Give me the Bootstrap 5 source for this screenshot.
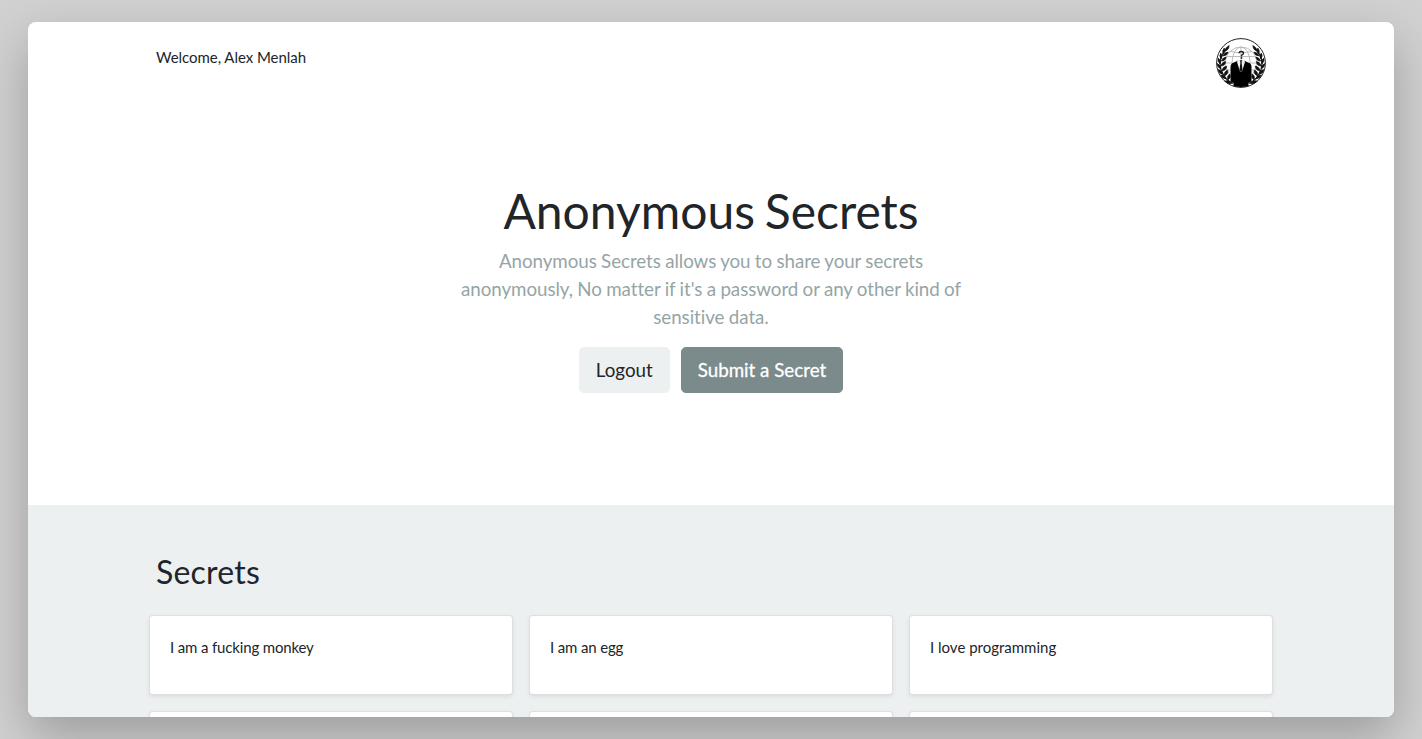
<!DOCTYPE html>
<html lang="en">
<head>
<meta charset="utf-8">
<meta name="viewport" content="width=device-width, initial-scale=1">
<title>Anonymous Secrets</title>
<link href="https://cdn.jsdelivr.net/npm/bootstrap@5.3.0/dist/css/bootstrap.min.css" rel="stylesheet">
<style>
  body { font-family: Lato, "Liberation Sans", sans-serif; font-size: 15px; line-height: 1.5; color: #212529; background: #d1d1d1; padding: 22px 28px; font-variant-ligatures: none; }
  .window-frame { height: 695px; border-radius: 8px; box-shadow: 0 20px 50px rgba(0,0,0,.25); }
  .page-width { width: 1140px; }
  .top-bar { height: 82px; padding: 16px 15px; }
  .welcome-text { margin-top: 8px; letter-spacing: -.04px; }
  .hero { height: 401px; padding-top: 78px; }
  .hero h1 { font-size: 48px; font-weight: 400; line-height: 57.6px; margin-bottom: 7px; word-spacing: -2.5px; }
  .intro { width: 520px; font-size: 18.75px; line-height: 28px; color: #95a5a6; margin-bottom: 16px; letter-spacing: -.05px; word-spacing: -.4px; }
  .btn-lg { --bs-btn-font-size: 18.75px; --bs-btn-border-radius: 4.8px; line-height: 28px; }
  .btn-pale { --bs-btn-bg: #ecf0f1; --bs-btn-color: #212529; --bs-btn-border-color: #ecf0f1; }
  .btn-slate { --bs-btn-bg: #7b8a8b; --bs-btn-color: #fff; --bs-btn-border-color: #7b8a8b; -webkit-text-stroke: .3px #fff; }
  .hero-actions { gap: 11px; }
  .secrets { background: #ecf0f1; padding-top: 48px; min-height: 212px; }
  .secrets h2 { font-size: 32px; font-weight: 400; line-height: 38px; padding-left: 15px; margin-bottom: 16px; letter-spacing: .2px; }
  .secret-card { height: 80px; padding: 20px; border: 1px solid rgba(0,0,0,.125); border-radius: 4px; box-shadow: 0 2px 4px rgba(0,0,0,.075); }
  .tight-text { letter-spacing: -.15px; }
</style>
</head>
<body>
<div class="window-frame bg-white overflow-hidden">
  <header class="page-width mx-auto top-bar d-flex justify-content-between align-items-start">
    <span class="welcome-text">Welcome, Alex Menlah</span>
    <svg width="50" height="50" viewBox="0 0 50 50" role="img" aria-label="Anonymous">
      <circle cx="25" cy="25" r="24.400" fill="#fff" stroke="#222" stroke-width="1"/>
      <g fill="none" stroke="#b5b5b5" stroke-width=".9">
        <circle cx="25" cy="25" r="16"/>
        <ellipse cx="25" cy="25" rx="9" ry="16"/>
        <path d="M25 9v32M9 25h32M10.500 18.500h29M14 13.500q11 3 22 0M11 32h28"/>
      </g>
      <g id="laurel">
        <path d="M10.500 11C3 19 2.500 28 7 36q3 6 10 9.500" fill="none" stroke="#222" stroke-width="1.300"/>
        <g fill="#111" stroke="#111" stroke-width=".6" transform="translate(-.8 0)">
          <path d="M9.500 13q1-4 4.500-5.500-.5 5-4.500 5.500zM8 16q-1.500-3 1-6 2 3-1 6zM7.500 18q2-4 5.500-4-1 4-5.500 4zM6 21q-2.500-3-.5-6 2.500 3 .5 6zM6 23q2-4 5-4-1 4.500-5 4zM5 26q-3-2.500-2-6 3.500 3 2 6zM5.500 28q1.500-4.500 5-4.500-.5 4.500-5 4.500zM5.500 31q-3.500-2-3.500-5.500 4 2 3.500 5.500zM6.500 33q1-4.500 5-5 0 4.500-5 5zM7.500 36.500q-4.500-1.500-4.500-5 4.500 1 4.500 5zM9 38q-.5-4.500 3.500-6 1 4.500-3.500 6zM11 41q-4.500-.5-5.500-4 4.500 0 5.500 4zM12.500 42q-1-4.500 2-6 2 4-2 6zM16.500 45.500q-4.500 1-7-2.500 4.500-1.500 7 2.500z"/>
        </g>
      </g>
      <use href="#laurel" transform="matrix(-1 0 0 1 50 0)"/>
      <path d="M14.500 43.500V29q0-3.500 3-4.200l4.500-2.300h6l4.500 2.300q3 .7 3 4.200v14.500l-3 1.500v3.300q-7.500 1.500-15 0V45z" fill="#000"/>
      <path d="M22 21.500L25 23l3-1.500 1 2.500-3 9.500h-2L21 24z" fill="#eee"/>
      <path d="M24 22.500h2l-.4 2 .9 7.500L25 34l-1.500-2 .9-7.500z" fill="#111"/>
      <path d="M23 15.200q.2-1.700 2.200-1.700 2.300 0 2.300 1.700 0 1.200-2 2.100v1.200" fill="none" stroke="#222" stroke-width="1.400"/>
      <circle cx="25.500" cy="20" r=".9" fill="#222"/>
    </svg>
  </header>
  <section class="hero d-flex flex-column align-items-center text-center">
    <h1>Anonymous Secrets</h1>
    <p class="intro">Anonymous Secrets allows you to share your secrets anonymously, No matter if it's a password or any other kind of sensitive data.</p>
    <div class="hero-actions d-flex">
      <a href="#" class="btn btn-lg btn-pale">Logout</a>
      <a href="#" class="btn btn-lg btn-slate">Submit a Secret</a>
    </div>
  </section>
  <section class="secrets">
    <div class="page-width mx-auto">
      <h2>Secrets</h2>
      <div class="row g-0">
        <div class="col-4 p-2"><div class="card secret-card tight-text">I am a fucking monkey</div></div>
        <div class="col-4 p-2"><div class="card secret-card tight-text">I am an egg</div></div>
        <div class="col-4 p-2"><div class="card secret-card">I love programming</div></div>
        <div class="col-4 p-2"><div class="card secret-card"></div></div>
        <div class="col-4 p-2"><div class="card secret-card"></div></div>
        <div class="col-4 p-2"><div class="card secret-card"></div></div>
      </div>
    </div>
  </section>
</div>
<script src="https://cdn.jsdelivr.net/npm/bootstrap@5.3.0/dist/js/bootstrap.bundle.min.js"></script>
</body>
</html>
